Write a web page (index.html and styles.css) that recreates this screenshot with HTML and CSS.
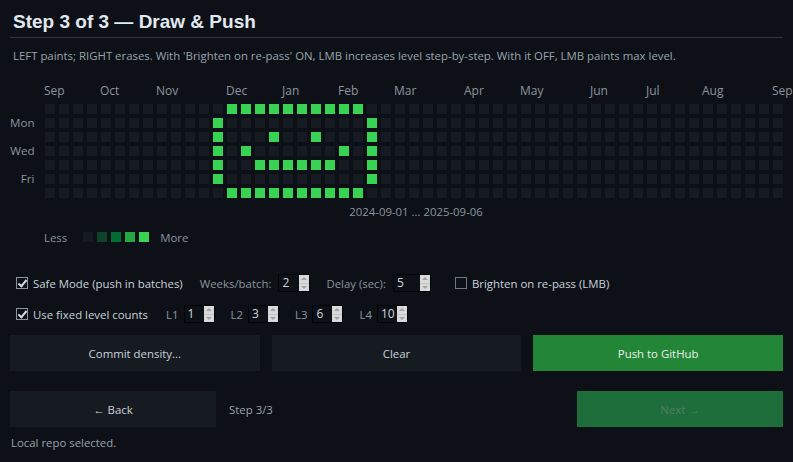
FILE: index.html
```html
<!DOCTYPE html>
<html>
<head>
<meta charset="utf-8">
<link rel="stylesheet" href="styles.css">
</head>
<body>
<div class="page">
  <header class="head">
    <h1 class="title">Step 3 of 3 — Draw &amp; Push</h1>
  </header>
  <p class="desc">LEFT paints; RIGHT erases. With 'Brighten on re-pass' ON, LMB increases level step-by-step. With it OFF, LMB paints max level.</p>

  <section class="board">
    <div class="days">
      <span></span><span>Mon</span><span></span><span>Wed</span><span></span><span>Fri</span><span></span>
    </div>
    <div class="graph">
      <div class="months">
        <span class="s4">Sep</span><span class="s4">Oct</span><span class="s5">Nov</span><span class="s4">Dec</span><span class="s4">Jan</span><span class="s4">Feb</span><span class="s5">Mar</span><span class="s4">Apr</span><span class="s5">May</span><span class="s4">Jun</span><span class="s4">Jul</span><span class="s5">Aug</span><span class="s1">Sep</span>
      </div>
      <div class="cells">
        <i></i><i></i><i></i><i></i><i></i><i></i><i></i>
        <i></i><i></i><i></i><i></i><i></i><i></i><i></i>
        <i></i><i></i><i></i><i></i><i></i><i></i><i></i>
        <i></i><i></i><i></i><i></i><i></i><i></i><i></i>
        <i></i><i></i><i></i><i></i><i></i><i></i><i></i>
        <i></i><i></i><i></i><i></i><i></i><i></i><i></i>
        <i></i><i></i><i></i><i></i><i></i><i></i><i></i>
        <i></i><i></i><i></i><i></i><i></i><i></i><i></i>
        <i></i><i></i><i></i><i></i><i></i><i></i><i></i>
        <i></i><i></i><i></i><i></i><i></i><i></i><i></i>
        <i></i><i></i><i></i><i></i><i></i><i></i><i></i>
        <i></i><i></i><i></i><i></i><i></i><i></i><i></i>
        <i></i><i class="g"></i><i class="g"></i><i class="g"></i><i class="g"></i><i class="g"></i><i></i>
        <i class="g"></i><i></i><i></i><i></i><i></i><i></i><i class="g"></i>
        <i class="g"></i><i></i><i></i><i class="g"></i><i></i><i></i><i class="g"></i>
        <i class="g"></i><i></i><i></i><i></i><i class="g"></i><i></i><i class="g"></i>
        <i class="g"></i><i></i><i class="g"></i><i></i><i class="g"></i><i></i><i class="g"></i>
        <i class="g"></i><i></i><i></i><i></i><i class="g"></i><i></i><i class="g"></i>
        <i class="g"></i><i></i><i></i><i></i><i class="g"></i><i></i><i class="g"></i>
        <i class="g"></i><i></i><i class="g"></i><i></i><i class="g"></i><i></i><i class="g"></i>
        <i class="g"></i><i></i><i></i><i></i><i class="g"></i><i></i><i class="g"></i>
        <i class="g"></i><i></i><i></i><i class="g"></i><i></i><i></i><i class="g"></i>
        <i class="g"></i><i></i><i></i><i></i><i></i><i></i><i class="g"></i>
        <i></i><i class="g"></i><i class="g"></i><i class="g"></i><i class="g"></i><i class="g"></i><i></i>
        <i></i><i></i><i></i><i></i><i></i><i></i><i></i>
        <i></i><i></i><i></i><i></i><i></i><i></i><i></i>
        <i></i><i></i><i></i><i></i><i></i><i></i><i></i>
        <i></i><i></i><i></i><i></i><i></i><i></i><i></i>
        <i></i><i></i><i></i><i></i><i></i><i></i><i></i>
        <i></i><i></i><i></i><i></i><i></i><i></i><i></i>
        <i></i><i></i><i></i><i></i><i></i><i></i><i></i>
        <i></i><i></i><i></i><i></i><i></i><i></i><i></i>
        <i></i><i></i><i></i><i></i><i></i><i></i><i></i>
        <i></i><i></i><i></i><i></i><i></i><i></i><i></i>
        <i></i><i></i><i></i><i></i><i></i><i></i><i></i>
        <i></i><i></i><i></i><i></i><i></i><i></i><i></i>
        <i></i><i></i><i></i><i></i><i></i><i></i><i></i>
        <i></i><i></i><i></i><i></i><i></i><i></i><i></i>
        <i></i><i></i><i></i><i></i><i></i><i></i><i></i>
        <i></i><i></i><i></i><i></i><i></i><i></i><i></i>
        <i></i><i></i><i></i><i></i><i></i><i></i><i></i>
        <i></i><i></i><i></i><i></i><i></i><i></i><i></i>
        <i></i><i></i><i></i><i></i><i></i><i></i><i></i>
        <i></i><i></i><i></i><i></i><i></i><i></i><i></i>
        <i></i><i></i><i></i><i></i><i></i><i></i><i></i>
        <i></i><i></i><i></i><i></i><i></i><i></i><i></i>
        <i></i><i></i><i></i><i></i><i></i><i></i><i></i>
        <i></i><i></i><i></i><i></i><i></i><i></i><i></i>
        <i></i><i></i><i></i><i></i><i></i><i></i><i></i>
        <i></i><i></i><i></i><i></i><i></i><i></i><i></i>
        <i></i><i></i><i></i><i></i><i></i><i></i><i></i>
        <i></i><i></i><i></i><i></i><i></i><i></i><i></i>
        <i></i><i></i><i></i><i></i><i></i><i></i><i></i>
      </div>
      <div class="range">2024-09-01 … 2025-09-06</div>
      <div class="legend">
        <span class="less">Less</span>
        <i class="l0"></i><i class="l1"></i><i class="l2"></i><i class="l3"></i><i class="l4"></i>
        <span class="more">More</span>
      </div>
    </div>
  </section>

  <div class="opts">
    <label class="check"><span class="box on"></span><span class="txt">Safe Mode (push in batches)</span></label>
    <span class="field lead"><span class="lbl">Weeks/batch:</span><span class="spin w32"><span class="val">2</span><span class="arrows"><span class="up"></span><span class="dn"></span></span></span></span>
    <span class="field"><span class="lbl">Delay (sec):</span><span class="spin w38"><span class="val">5</span><span class="arrows"><span class="up"></span><span class="dn"></span></span></span></span>
    <label class="check far"><span class="box"></span><span class="txt">Brighten on re-pass (LMB)</span></label>
  </div>
  <div class="opts second">
    <label class="check"><span class="box on"></span><span class="txt">Use fixed level counts</span></label>
    <span class="field tight lead2"><span class="lbl">L1</span><span class="spin w31"><span class="val">1</span><span class="arrows"><span class="up"></span><span class="dn"></span></span></span></span>
    <span class="field tight"><span class="lbl">L2</span><span class="spin w31"><span class="val">3</span><span class="arrows"><span class="up"></span><span class="dn"></span></span></span></span>
    <span class="field tight"><span class="lbl">L3</span><span class="spin w31"><span class="val">6</span><span class="arrows"><span class="up"></span><span class="dn"></span></span></span></span>
    <span class="field tight"><span class="lbl">L4</span><span class="spin w31"><span class="val">10</span><span class="arrows"><span class="up"></span><span class="dn"></span></span></span></span>
  </div>

  <div class="actions">
    <button class="btn">Commit density...</button>
    <button class="btn">Clear</button>
    <button class="btn primary">Push to GitHub</button>
  </div>

  <div class="nav">
    <button class="btn navbtn">← Back</button>
    <span class="stepno">Step 3/3</span>
    <button class="btn navbtn next">Next →</button>
  </div>

  <div class="status">Local repo selected.</div>
</div>
</body>
</html>
```

FILE: styles.css
```css
* { box-sizing: border-box; }
html, body {
  margin: 0;
  background: #0d1117;
  height: 100%;
  overflow: hidden;
}
body {
  font-family: "Open Sans", "Noto Sans", sans-serif;
  font-size: 11.4px;
  color: #c9d1d9;
}
.page {
  padding: 10px 10px 0 10px;
  display: flex;
  flex-direction: column;
}
.head {
  border-bottom: 1px solid #30363d;
  padding: 0 0 4px 3px;
}
.title {
  margin: 0;
  font-family: "Liberation Sans", Arial, sans-serif;
  font-weight: bold;
  font-size: 19px;
  line-height: 23px;
  color: #e1e8f0;
}
.desc {
  margin: 10px 0 0 3px;
  line-height: 16px;
  color: #9aa3ad;
}

/* contribution board */
.board {
  margin-top: 20px;
  display: flex;
  gap: 11px;
}
.days {
  width: 24px;
  margin-top: 20px;
  display: grid;
  grid-template-rows: repeat(7, 10px);
  row-gap: 4px;
  text-align: right;
  padding-right: 2px;
  color: #8b949e;
  line-height: 10px;
  font-size: 11.6px;
}
.days span { white-space: nowrap; }
.graph {
  display: flex;
  flex-direction: column;
}
.months {
  display: grid;
  grid-template-columns: repeat(53, 10px);
  column-gap: 4px;
  height: 14px;
  line-height: 14px;
  color: #8b949e;
  margin-bottom: 6px;
  font-size: 12px;
}
.months span { white-space: nowrap; margin-left: -1px; }
.s1 { grid-column: span 1; }
.s4 { grid-column: span 4; }
.s5 { grid-column: span 5; }
.cells {
  display: grid;
  grid-template-rows: repeat(7, 10px);
  grid-auto-flow: column;
  grid-auto-columns: 10px;
  gap: 4px;
}
.cells i {
  display: block;
  background: #161b22;
}
.cells i.g { background: #39d353; }
.range {
  margin-top: 6px;
  line-height: 16px;
  text-align: center;
  color: #8b949e;
  padding-left: 4px;
}
.legend {
  margin-top: 9px;
  margin-left: -1px;
  display: flex;
  align-items: center;
  height: 16px;
  color: #8b949e;
}
.legend i {
  width: 10px;
  height: 10px;
  margin-right: 4px;
  display: block;
}
.legend .less { margin-right: 16px; }
.legend .more { margin-left: 7px; }
.l0 { background: #161b22; }
.l1 { background: #0e4429; }
.l2 { background: #006d32; }
.l3 { background: #26a641; }
.l4 { background: #39d353; }

/* options */
.opts {
  margin-top: 28px;
  height: 20px;
  display: flex;
  align-items: center;
  padding-left: 6px;
}
.opts.second { margin-top: 11px; }
.check {
  display: flex;
  align-items: center;
  gap: 5px;
  color: #c9d1d9;
}
.box {
  width: 12px;
  height: 12px;
  border: 1px solid #8b949e;
  background: #0d1117;
  position: relative;
}
.box.on::after {
  content: "";
  position: absolute;
  left: 3px;
  top: 0px;
  width: 3px;
  height: 7px;
  border: solid #d7dde3;
  border-width: 0 2px 2px 0;
  transform: rotate(40deg);
}
.check.far { margin-left: 24px; }
.check.far .box { border-color: #6e7681; }
.field {
  display: flex;
  align-items: center;
  gap: 7px;
  margin-left: 16px;
  color: #8b949e;
}
.field.tight { gap: 5px; }
.field.lead { margin-left: 17px; }
.field.lead2 { margin-left: 18px; }
.spin {
  height: 18px;
  display: flex;
  background: #0d1117;
  border: 1px solid #010409;
  color: #d0d7de;
}
.w31 { width: 31px; }
.w32 { width: 32px; }
.w38 { width: 38px; }
.val {
  flex: 1;
  padding-left: 3px;
  line-height: 16px;
  font-size: 12px;
}
.arrows {
  width: 10px;
  display: flex;
  flex-direction: column;
  background: #d9d9d9;
}
.arrows span {
  flex: 1;
  position: relative;
}
.arrows .up { border-bottom: 1px solid #c4c4c4; }
.arrows span::after {
  content: "";
  position: absolute;
  left: 2px;
  width: 0;
  height: 0;
  border-left: 3px solid transparent;
  border-right: 3px solid transparent;
}
.arrows .up::after { top: 2px; border-bottom: 3px solid #a3a3a3; }
.arrows .dn::after { top: 2px; border-top: 3px solid #a3a3a3; }

/* buttons */
.actions {
  margin-top: 11px;
  display: grid;
  grid-template-columns: repeat(3, 1fr);
  column-gap: 12px;
}
.btn {
  height: 36px;
  border: none;
  background: #161b22;
  color: #c9d1d9;
  font: inherit;
  padding: 0;
}
.btn.primary {
  background: #238636;
  color: #e8f0ea;
}
.nav {
  margin-top: 20px;
  display: flex;
  align-items: center;
}
.navbtn { width: 206px; }
.stepno {
  margin-left: 13px;
  flex: 1;
  color: #9aa3ad;
}
.next {
  background: #1e6e3b;
  color: #4f7d5b;
}
.status {
  margin-top: 8px;
  padding-left: 1px;
  line-height: 16px;
  color: #9aa3ad;
}
```
